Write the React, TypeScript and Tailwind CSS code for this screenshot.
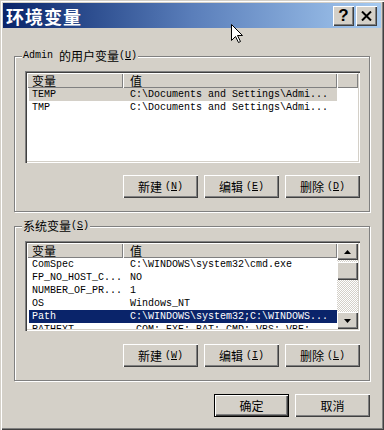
import React from 'react';

const CJK = /[\u3000-\u9fff\uff00-\uffef]/;

// mixed text: CJK in 12px sans, latin in 10px mono (half width, like SimSun)
function T({ s }: { s: string }) {
  const parts = s.match(/[\u3000-\u9fff\uff00-\uffef]+|[^\u3000-\u9fff\uff00-\uffef]+/g) ?? [];
  return (
    <>
      {parts.map((p, i) =>
        CJK.test(p) ? (
          <span key={i} className="font-['Noto_Sans_CJK_SC',sans-serif] text-[12px]">
            {p}
          </span>
        ) : (
          <span key={i} className="font-['Liberation_Mono',monospace] text-[10px] whitespace-pre">
            {p}
          </span>
        )
      )}
    </>
  );
}

function Key({ k }: { k: string }) {
  return (
    <span className="font-['Liberation_Mono',monospace] text-[10px]">
      (<span className="underline">{k}</span>)
    </span>
  );
}

function Btn({ t, k, def }: { t: string; k?: string; def?: boolean }) {
  return (
    <div
      className={
        def
          ? 'w-[75px] h-[23px] flex items-center justify-center gap-[3px] bg-[#D4D0C8] border border-black shadow-[inset_1px_1px_0_#fff,inset_-1px_-1px_0_#404040,inset_-2px_-2px_0_#808080] leading-none'
          : 'w-[75px] h-[23px] flex items-center justify-center gap-[3px] bg-[#D4D0C8] shadow-[inset_1px_1px_0_#fff,inset_-1px_-1px_0_#404040,inset_-2px_-2px_0_#808080] leading-none'
      }
    >
      <span className="font-['Noto_Sans_CJK_SC',sans-serif] text-[12px]">{t}</span>
      {k && <Key k={k} />}
    </div>
  );
}

function Header({ fill }: { fill: boolean }) {
  return (
    <div className="flex h-[15px] shrink-0 leading-none">
      <div className="w-[96px] pl-[5px] flex items-center shadow-[inset_1px_1px_0_#fff,inset_-1px_-1px_0_#808080]">
        <T s="变量" />
      </div>
      <div className="w-[214px] pl-[7px] flex items-center shadow-[inset_1px_1px_0_#fff,inset_-1px_-1px_0_#808080]">
        <T s="值" />
      </div>
      {fill && <div className="flex-1 shadow-[inset_1px_1px_0_#fff,inset_-1px_-1px_0_#808080]" />}
    </div>
  );
}

type Row = { n: string; v: string; sel?: 'grey' | 'blue' };

function Rows({ rows }: { rows: Row[] }) {
  return (
    <div className="flex-1 bg-white overflow-hidden">
      {rows.map((r) => (
        <div
          key={r.n}
          className={
            r.sel === 'blue'
              ? 'flex h-[13px] ml-[2px] w-[308px] leading-none bg-[#0A246A] text-white'
              : r.sel === 'grey'
              ? 'flex h-[13px] ml-[2px] w-[308px] leading-none bg-[#D4D0C8]'
              : 'flex h-[13px] ml-[2px] w-[308px] leading-none'
          }
        >
          <div className="w-[94px] pl-[3px] flex items-center">
            <T s={r.n} />
          </div>
          <div className="flex-1 pl-[7px] flex items-center">
            <T s={r.v} />
          </div>
        </div>
      ))}
    </div>
  );
}

function Arrow({ up }: { up: boolean }) {
  return (
    <div className="h-[17px] flex items-center justify-center bg-[#D4D0C8] shadow-[inset_1px_1px_0_#fff,inset_-1px_-1px_0_#404040,inset_-2px_-2px_0_#808080]">
      <svg width="7" height="4" viewBox="0 0 7 4">
        {up ? <path d="M3.5 0 L7 4 L0 4 Z" fill="#000" /> : <path d="M0 0 L7 0 L3.5 4 Z" fill="#000" />}
      </svg>
    </div>
  );
}

const sunken =
  'bg-white p-[2px] shadow-[inset_1px_1px_0_#808080,inset_2px_2px_0_#404040,inset_-1px_-1px_0_#fff,inset_-2px_-2px_0_#D4D0C8]';

const groupBox =
  'w-[356px] ml-[11px] border border-[#808080] shadow-[inset_1px_1px_0_#fff,1px_1px_0_#fff] pb-[13px]';

const legend = 'ml-[7px] px-[1px] bg-[#D4D0C8] h-[14px] flex items-center leading-none';

export default function App() {
  const userVars: Row[] = [
    { n: 'TEMP', v: 'C:\\Documents and Settings\\Admi...', sel: 'grey' },
    { n: 'TMP', v: 'C:\\Documents and Settings\\Admi...' },
  ];
  const sysVars: Row[] = [
    { n: 'ComSpec', v: 'C:\\WINDOWS\\system32\\cmd.exe' },
    { n: 'FP_NO_HOST_C...', v: 'NO' },
    { n: 'NUMBER_OF_PR...', v: '1' },
    { n: 'OS', v: 'Windows_NT' },
    { n: 'Path', v: 'C:\\WINDOWS\\system32;C:\\WINDOWS...', sel: 'blue' },
    { n: 'PATHEXT', v: '.COM;.EXE;.BAT;.CMD;.VBS;.VBE;...' },
  ];

  return (
    <div className="relative w-[384px] h-[430px] bg-[#D4D0C8] p-[3px] text-black text-[12px] shadow-[inset_1px_1px_0_#D4D0C8,inset_2px_2px_0_#fff,inset_-1px_-1px_0_#404040,inset_-2px_-2px_0_#808080] overflow-hidden">
      {/* title bar */}
      <div className="h-[25px] flex items-center justify-between bg-linear-to-r from-[#0A246A] via-[#5A7EBA] to-[#A6CAF0] pl-[3px] pr-[4px]">
        <span className="font-['Noto_Sans_CJK_SC',sans-serif] text-[18px] font-bold text-white leading-none tracking-[1px]">
          环境变量
        </span>
        <div className="flex gap-[2px]">
          <div className="w-[21px] h-[20px] flex items-center justify-center bg-[#D4D0C8] shadow-[inset_1px_1px_0_#fff,inset_-1px_-1px_0_#404040,inset_-2px_-2px_0_#808080] font-['Liberation_Sans',sans-serif] text-[17px] font-bold leading-none">
            ?
          </div>
          <div className="w-[21px] h-[20px] flex items-center justify-center bg-[#D4D0C8] shadow-[inset_1px_1px_0_#fff,inset_-1px_-1px_0_#404040,inset_-2px_-2px_0_#808080]">
            <svg width="11" height="10" viewBox="0 0 11 10">
              <path d="M1 0.5 L10 9.5 M10 0.5 L1 9.5" stroke="#000" strokeWidth="2" />
            </svg>
          </div>
        </div>
      </div>

      {/* user variables */}
      <fieldset className={`${groupBox} mt-[21px]`}>
        <legend className={legend}>
          <T s="Admin 的用户变量" />
          <Key k="U" />
        </legend>
        <div className={`${sunken} ml-[10px] mt-[8px] w-[335px] h-[92px] flex flex-col`}>
          <div className="bg-[#D4D0C8]">
            <Header fill />
          </div>
          <Rows rows={userVars} />
        </div>
        <div className="ml-[10px] w-[335px] mt-[12px] flex justify-end gap-[6px]">
          <Btn t="新建" k="N" />
          <Btn t="编辑" k="E" />
          <Btn t="删除" k="D" />
        </div>
      </fieldset>

      {/* system variables */}
      <fieldset className={`${groupBox} mt-[7px]`}>
        <legend className={legend}>
          <T s="系统变量" />
          <Key k="S" />
        </legend>
        <div className={`${sunken} ml-[10px] mt-[8px] w-[335px] h-[90px] flex`}>
          <div className="flex-1 flex flex-col min-w-0 bg-[#D4D0C8]">
            <Header fill={false} />
            <Rows rows={sysVars} />
          </div>
          <div className="w-[21px] flex flex-col">
            <Arrow up />
            <div className="h-[2px] bg-[repeating-conic-gradient(#fff_0_25%,#D4D0C8_0_50%)] bg-[length:2px_2px]" />
            <div className="h-[18px] bg-[#D4D0C8] shadow-[inset_1px_1px_0_#fff,inset_-1px_-1px_0_#404040,inset_-2px_-2px_0_#808080]" />
            <div className="flex-1 bg-[repeating-conic-gradient(#fff_0_25%,#D4D0C8_0_50%)] bg-[length:2px_2px]" />
            <Arrow up={false} />
          </div>
        </div>
        <div className="ml-[10px] w-[335px] mt-[13px] flex justify-end gap-[6px]">
          <Btn t="新建" k="W" />
          <Btn t="编辑" k="I" />
          <Btn t="删除" k="L" />
        </div>
      </fieldset>

      <div className="ml-[11px] w-[356px] mt-[13px] flex justify-end gap-[6px]">
        <Btn t="确定" def />
        <Btn t="取消" />
      </div>

      {/* mouse pointer */}
      <svg className="absolute left-[231px] top-[24px]" width="13" height="20" viewBox="0 0 13 20">
        <path
          d="M0.5 0.5 L0.5 16.5 L4.5 12.5 L7.5 18.5 L9.5 17.5 L6.5 11.5 L11.5 11.5 Z"
          fill="#fff"
          stroke="#000"
          strokeWidth="1"
        />
      </svg>
    </div>
  );
}
